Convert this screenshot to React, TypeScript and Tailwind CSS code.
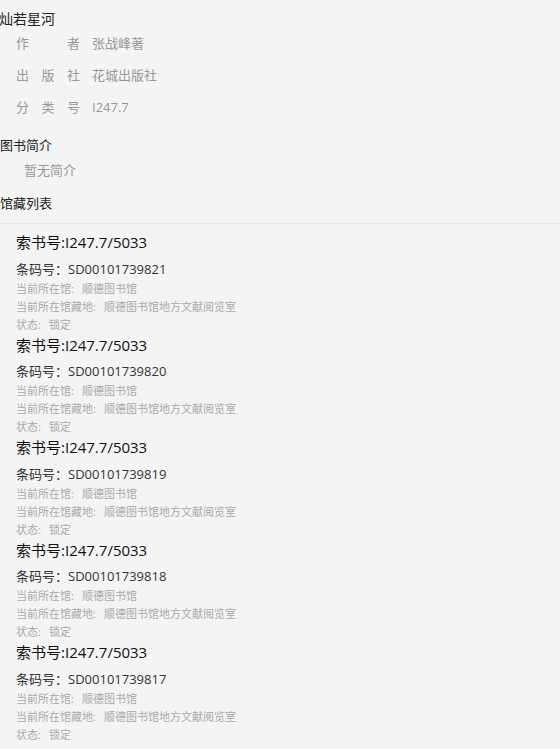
import React from "react";

const font = {
  fontFamily: '"Open Sans", "Noto Sans CJK SC", sans-serif',
};

const infoRows = [
  { label: ["作", "者"], value: "张战峰著" },
  { label: ["出", "版", "社"], value: "花城出版社" },
  { label: ["分", "类", "号"], value: "I247.7" },
];

const holdings = [
  "SD00101739821",
  "SD00101739820",
  "SD00101739819",
  "SD00101739818",
  "SD00101739817",
];

export default function App() {
  return (
    <div
      className="w-[560px] h-[749px] overflow-hidden bg-[#f4f4f4]"
      style={font}
    >
      <div className="pt-[9px] leading-[19px] text-[14px] text-[#222] -ml-[1px]">
        灿若星河
      </div>
      <div>
        {infoRows.map((row) => (
          <div
            key={row.value}
            className="flex items-center h-[32px] pl-[16px] text-[13px] text-[#999]"
          >
            <div className="flex justify-between w-[64px]">
              {row.label.map((c) => (
                <span key={c}>{c}</span>
              ))}
            </div>
            <span className="ml-[12px]">{row.value}</span>
          </div>
        ))}
      </div>
      <div className="mt-[11px] leading-[20px] text-[13px] text-[#222]">
        图书简介
      </div>
      <div className="mt-[5px] pl-[24px] leading-[20px] text-[13px] text-[#999]">
        暂无简介
      </div>
      <div className="mt-[13px] pb-[10px] leading-[20px] text-[13px] text-[#222] border-b border-[#e5e5e5]">
        馆藏列表
      </div>
      <div className="pt-[7px] pl-[16px]">
        {holdings.map((code) => (
          <div key={code}>
            <div className="leading-[22px] text-[15px] text-[#111]">
              索书号:I247.7/5033
            </div>
            <div className="mt-[4.5px] leading-[22px] text-[13px] text-[#333]">
              条码号：{code}
            </div>
            <div className="text-[11px] leading-[18px] text-[#aaa]">
              <div>
                当前所在馆:<span className="ml-[8px]">顺德图书馆</span>
              </div>
              <div>
                当前所在馆藏地:
                <span className="ml-[8px]">顺德图书馆地方文献阅览室</span>
              </div>
              <div>
                状态:<span className="ml-[8px]">锁定</span>
              </div>
            </div>
          </div>
        ))}
      </div>
    </div>
  );
}
